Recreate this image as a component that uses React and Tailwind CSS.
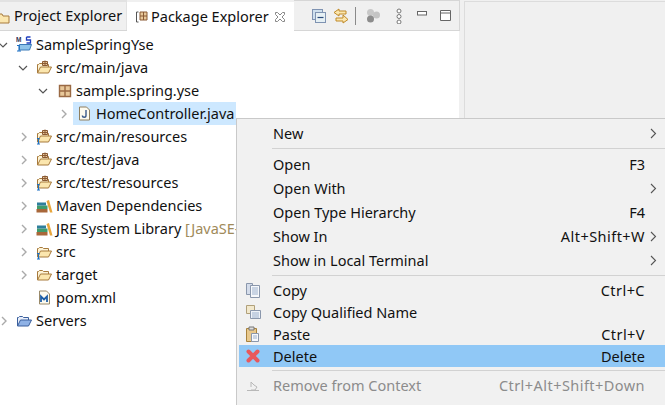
import React from "react";

const Chev = ({ open }) => (
  <svg width="10" height="10" viewBox="0 0 10 10" className="ml-[-2px] shrink-0 overflow-visible">
    {open ? <path d="M1 3l4 4 4-4" fill="none" stroke="#555" strokeWidth="1.2" /> : <path d="M4 1l4 4-4 4" fill="none" stroke="#aaa" strokeWidth="1.4" />}
  </svg>
);

const Folder = ({ info, pkg, blue }) => (
  <svg width="17" height="16" viewBox="0 0 17 16" className="shrink-0">
    <path d="M1.5 13V4.5h1l1-1h3l1 1h5V7" fill={blue ? "#e8eefa" : "#fdf3d6"} stroke={blue ? "#3a5f9c" : "#a77a3c"} />
    <path d="M1.5 13l3-6h11l-3 6z" fill={blue ? "#8fb2e6" : "#fbe6ae"} stroke={blue ? "#3a5f9c" : "#a77a3c"} />
    {pkg && <path d="M6.5 1.5h5v4h-5zM9 .5v5M6 3.5h6" fill="#e8c89a" stroke="#8a5a34" strokeWidth="1" />}
    {info && <path d="M1 9.5h2v1M2.5 10.5V14.5M1 15h3" fill="none" stroke="#1a6fc4" strokeWidth="1.1" />}
  </svg>
);

const Lib = () => (
  <svg width="17" height="16" viewBox="0 0 17 16" className="shrink-0">
    <rect x="0.5" y="11" width="11" height="3.5" fill="#a8673a" />
    <rect x="1" y="7.5" width="10.5" height="3.5" fill="#3f9c6c" />
    <rect x="1" y="4.5" width="9" height="3" fill="#2f7f9c" />
    <path d="M10.5 3l2.5-1 3.5 12.5h-2.5z" fill="#e8a63c" />
  </svg>
);

const Row = ({ indent, chev, icon, children, sel }) => (
  <div className="flex h-[23px] items-center" style={{ paddingLeft: indent }}>
    <span className="flex w-[13px] shrink-0 items-center">{chev}</span>
    <span className={`flex h-[23px] items-center pl-[3px] pr-[2px] ${sel ? "bg-[#cde8ff]" : ""}`}>
      <span className="flex w-[17px] shrink-0 items-center">{icon}</span>
      <span className="ml-[3px] whitespace-nowrap">{children}</span>
    </span>
  </div>
);

const MI = ({ label, sc, arrow, h = "h-[24px]", icon, active, disabled, wide }) => (
  <div className={`flex ${h} items-center ${active ? "bg-[#90c8f6]" : ""} ${disabled ? "text-[#8c8c8c]" : "text-[#111]"}`}>
    <span className="flex w-[34px] shrink-0 items-center justify-start pl-[7px]">{icon}</span>
    <span className={`whitespace-nowrap ${disabled ? "" : "pt-[2px]"}`}>{label}</span>
    <span className="flex-1" />
    <span className={`whitespace-nowrap ${disabled ? "" : "pt-[2px]"} ${wide ? "tracking-[0.45px]" : ""}`}>{sc}</span>
    <span className="flex w-[20px] shrink-0 items-center justify-start pl-[5px]">
      {arrow && <svg width="7" height="11" viewBox="0 0 7 11"><path d="M1 1l4.5 4.5L1 10" fill="none" stroke="#555" strokeWidth="1.1" /></svg>}
    </span>
  </div>
);

const Sep = () => <div className="my-[3px] ml-[33px] h-[1px] bg-[#d2d2d2]" />;

export default function App() {
  return (
    <div className="relative flex h-[405px] w-[665px] overflow-hidden bg-[#f0f0f0] text-[14.5px] text-[#111]" style={{ fontFamily: '"Noto Sans", sans-serif' }}>
      <div className="flex h-[118px] w-[460px] shrink-0 flex-col">
        <div className="flex h-[31px] shrink-0 border-b border-[#d6d6d6]">
          <div className="flex w-[127px] items-center gap-[2px] border-t-2 border-r border-[#e2e2e2]">
            <svg width="12" height="16" viewBox="0 0 12 16" className="mt-[3px]"><path d="M-4 13V4h6l1 2h6v7z" fill="#fbe6ae" stroke="#a77a3c" /></svg>
            <span className="whitespace-nowrap">Project Explorer</span>
          </div>
          <div className="mt-[2px] flex h-[29px] w-[167px] items-center bg-white pl-[8px]">
            <svg width="13" height="16" viewBox="0 0 13 16" className="shrink-0">
              <path d="M1.5 3v10M1.5 3h2M1.5 13h2" fill="none" stroke="#555" />
              <path d="M5 3h7v8H5zM8.5 3v8M5 7h7" fill="#e8c89a" stroke="#8a5a34" />
            </svg>
            <span className="ml-[3px] whitespace-nowrap">Package Explorer</span>
            <svg width="12" height="12" viewBox="0 0 12 12" className="ml-[5px] shrink-0"><path d="M1.5 1.5h2L6 4l2.5-2.5h2v2L8 6l2.5 2.5v2h-2L6 8l-2.5 2.5h-2v-2L4 6 1.5 3.5z" fill="#fff" stroke="#888" /></svg>
          </div>
          <div className="flex flex-1 items-center border-t border-r border-[#d6d6d6] pl-[18px]">
            <svg width="14" height="14" viewBox="0 0 14 14" className="shrink-0"><rect x="0.5" y="0.5" width="10" height="10" fill="#cfe0ee" stroke="#7f93b2" /><rect x="3.5" y="3.5" width="10" height="10" fill="#e6f0f4" stroke="#7f93b2" /><path d="M5.5 8.5h6" stroke="#2a4a7a" strokeWidth="1.2" /></svg>
            <svg width="16" height="16" viewBox="0 0 16 16" className="ml-[7px] shrink-0"><path d="M6 1L1 4.5 6 8V6h7V3H6zM10 7l5 4.5L10 15v-2H3v-3h7z" fill="#fbe6ae" stroke="#c08a28" /></svg>
            <div className="ml-[6px] h-[18px] w-[1px] bg-[#8a8a8a]" />
            <svg width="14" height="16" viewBox="0 0 14 16" className="ml-[10px] shrink-0"><circle cx="4.5" cy="4.5" r="3.5" fill="#c8c8c8" /><circle cx="10.5" cy="7" r="3.5" fill="#c4c4c4" /><circle cx="4.5" cy="11" r="3.5" fill="#8c8c8c" /></svg>
            <svg width="6" height="16" viewBox="0 0 6 16" className="ml-[16px] shrink-0"><g fill="#fff" stroke="#777"><circle cx="3" cy="3" r="2" /><circle cx="3" cy="8.5" r="2" /><circle cx="3" cy="14" r="2" /></g></svg>
            <svg width="10" height="5" viewBox="0 0 10 5" className="mb-[4px] ml-[15px] shrink-0"><rect x="0.5" y="0.5" width="9" height="3.5" fill="#fff" stroke="#666" /></svg>
            <svg width="11" height="11" viewBox="0 0 11 11" className="ml-[13px] shrink-0"><path d="M.5.5h10v10H.5zM.5 3h10" fill="#fff" stroke="#666" /></svg>
          </div>
        </div>
      </div>
      <div className="ml-[4px] mt-[1px] h-[117px] flex-1 border-t border-l border-[#dcdcdc]" />

      <div className="absolute left-0 top-[31px] h-[87px] w-[459px] bg-white" />
      <div className="absolute left-0 top-[118px] h-[287px] w-[236px] bg-white" />

      <div className="absolute left-0 top-[33px] w-[236px]">
        <Row indent={0} chev={<Chev open />} icon={
          <svg width="17" height="17" viewBox="0 0 17 17">
            <path d="M3.5 8.5h12l-2 5.5H3.5z" fill="#8fc4ea" stroke="#3a7ab8" />
            <text x="0" y="6" fontSize="6.5" fontWeight="700" fill="#335" fontFamily="Liberation Sans">M</text>
            <path d="M10.5 1h4M10.5 1v3h4v3h-4" fill="none" stroke="#1f3fbf" strokeWidth="1.3" />
            <path d="M1 9.5h2v5M1 15h4" fill="none" stroke="#1a6fc4" strokeWidth="1.1" />
          </svg>}>SampleSpringYse</Row>
        <Row indent={20} chev={<Chev open />} icon={<Folder pkg />}>src/main/java</Row>
        <Row indent={40} chev={<Chev open />} icon={
          <svg width="14" height="14" viewBox="0 0 14 14" className="ml-[2px]"><path d="M1.5 1.5h11v11h-11zM7 1.5v11M1.5 7h11" fill="#e8c89a" stroke="#9a6a44" strokeWidth="1.4" /></svg>}>sample.spring.yse</Row>
        <Row indent={60} chev={<Chev />} icon={
          <svg width="13" height="15" viewBox="0 0 13 15" className="ml-[2px]"><path d="M1.5 1h7l3 3v10h-10z" fill="#fdfbf0" stroke="#8f7f5f" /><path d="M8 4v5.5a1.8 1.8 0 0 1-3.6 0" fill="none" stroke="#3a5a8a" strokeWidth="1.4" /></svg>} sel>HomeController.java</Row>
        <Row indent={20} chev={<Chev />} icon={<Folder pkg info />}>src/main/resources</Row>
        <Row indent={20} chev={<Chev />} icon={<Folder pkg />}>src/test/java</Row>
        <Row indent={20} chev={<Chev />} icon={<Folder pkg info />}>src/test/resources</Row>
        <Row indent={20} chev={<Chev />} icon={<Lib />}>Maven Dependencies</Row>
        <Row indent={20} chev={<Chev />} icon={<Lib />}>JRE System Library <span className="text-[#a08a5a]">[JavaSE-1.8]</span></Row>
        <Row indent={20} chev={<Chev />} icon={<Folder info />}>src</Row>
        <Row indent={20} chev={<Chev />} icon={<Folder />}>target</Row>
        <Row indent={20} chev={null} icon={
          <svg width="13" height="15" viewBox="0 0 13 15" className="ml-[2px]"><path d="M1.5 1h7l3 3v10h-10z" fill="#fdfbf0" stroke="#9a8a6a" /><path d="M3 12V6.5l3 3 3-3V12" fill="none" stroke="#1f5fa8" strokeWidth="1.8" /></svg>}>pom.xml</Row>
        <Row indent={0} chev={<Chev />} icon={<Folder blue />}>Servers</Row>
      </div>

      <div className="absolute left-[236px] top-[118px] h-[287px] w-[429px] border-t border-l border-[#c9c9c9] bg-[#f1f1f1] pl-[2px] pt-[2px]">
        <MI label="New" arrow />
        <Sep />
        <MI label="Open" sc="F3" />
        <MI label="Open With" arrow />
        <MI label="Open Type Hierarchy" sc="F4" />
        <MI label="Show In" sc="Alt+Shift+W" arrow wide />
        <MI label="Show in Local Terminal" arrow />
        <Sep />
        <MI h="h-[22px]" label="Copy" sc="Ctrl+C" wide icon={
          <svg width="14" height="15" viewBox="0 0 14 15"><path d="M.5.5h6v11h-6z" fill="#d4dcea" stroke="#8a97ac" /><path d="M4.5 2.5h9v12h-9z" fill="#f6f8fb" stroke="#8a97ac" /><path d="M6 5h6M6 7h6M6 9h6M6 11h6" stroke="#9cb0cc" /></svg>} />
        <MI h="h-[22px]" label="Copy Qualified Name" icon={
          <svg width="15" height="14" viewBox="0 0 15 14"><path d="M.5.5h8v8h-8z" fill="#f2e8cc" stroke="#b0a07a" /><path d="M4.5 5.5h10v8h-10z" fill="#eef2f8" stroke="#8a97ac" /><path d="M6 8h7M6 10h7M6 12h7" stroke="#9cb0cc" /></svg>} />
        <MI h="h-[22px]" label="Paste" sc="Ctrl+V" wide icon={
          <svg width="13" height="16" viewBox="0 0 13 16"><path d="M.5 2.5h10v13h-10z" fill="#e8c88c" stroke="#a8823c" /><path d="M3 1h5v3H3z" fill="#ddd" stroke="#777" /><path d="M5.5 7.5h7v8h-7z" fill="#f6f8fb" stroke="#8a97ac" /><path d="M7 10h4M7 12h4" stroke="#9cb0cc" /></svg>} />
        <MI h="h-[22px]" label="Delete" sc="Delete" active icon={
          <svg width="14" height="14" viewBox="0 0 14 14"><path d="M2.5 2.5l9 9M11.5 2.5l-9 9" stroke="#e8585c" strokeWidth="4" strokeLinecap="round" /></svg>} />
        <Sep />
        <MI label="Remove from Context" sc="Ctrl+Alt+Shift+Down" wide disabled icon={
          <svg width="14" height="14" viewBox="0 0 14 14"><path d="M1 11.5h12M5 8V3l3 3 3 2-2 3H5" fill="none" stroke="#b8b8b8" /></svg>} />
        <MI label="Build Path" arrow />
      </div>
    </div>
  );
}
